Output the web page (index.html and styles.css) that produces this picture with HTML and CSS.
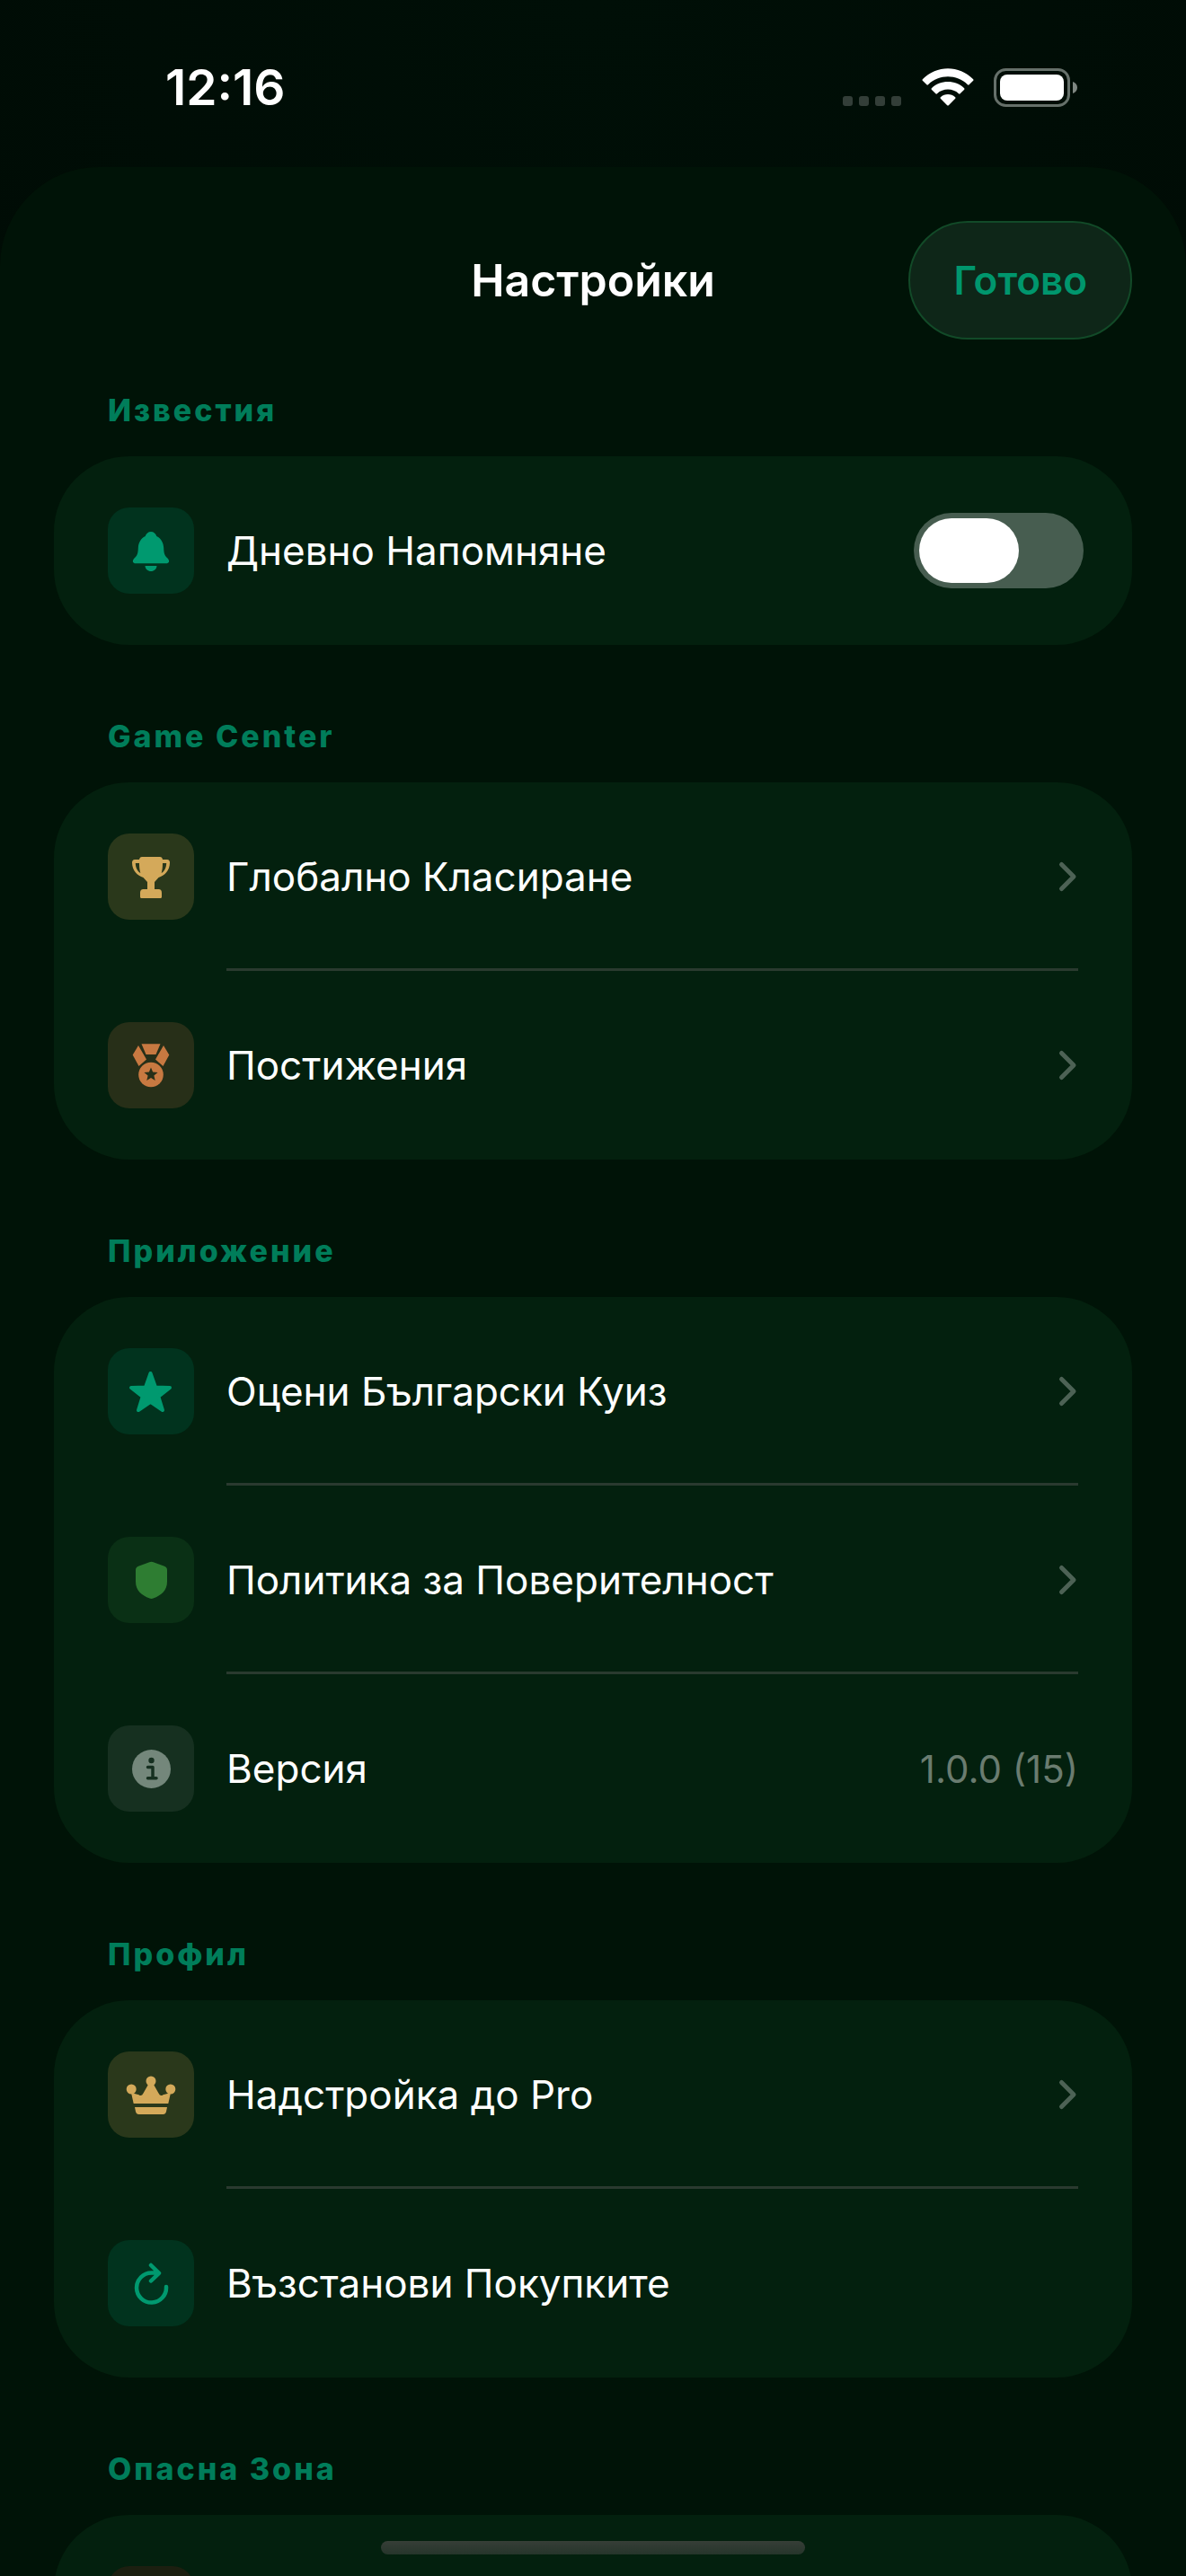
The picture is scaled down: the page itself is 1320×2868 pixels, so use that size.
FILE: index.html
```html
<!DOCTYPE html>
<html lang="bg">
  <head>
    <meta charset="utf-8">
    <meta name="viewport" content="width=device-width, initial-scale=1">
    <title>Настройки</title>
    <link rel="stylesheet" href="styles.css">
  </head>
  <body>
    <div class="screen">
      <div class="status-bar">
        <span class="time">12:16</span>
        <div class="status-icons">
          <svg class="signal" viewBox="0 0 66 12" aria-hidden="true">
            <rect x="0" y="0" width="11" height="11" rx="3" />
            <rect x="18" y="0" width="11" height="11" rx="3" />
            <rect x="36" y="0" width="11" height="11" rx="3" />
            <rect x="54" y="0" width="11" height="11" rx="3" />
          </svg>
          <svg class="wifi" viewBox="0 0 58 43" aria-hidden="true">
            <path d="M0.8 12.2 C16.5 -3.8 41.5 -3.8 57.2 12.2 Q57.8 13 57.2 13.8 L52.6 18.3 Q51.8 19 51 18.2 C38.8 6.3 19.2 6.3 7 18.2 Q6.2 19 5.4 18.3 L0.8 13.8 Q0.2 13 0.8 12.2 Z" />
            <path d="M10.8 22.2 C20.5 12.6 37.5 12.6 47.2 22.2 Q47.8 23 47.2 23.8 L42.6 28.3 Q41.8 29 41 28.2 C34.4 22 23.6 22 17 28.2 Q16.2 29 15.4 28.3 L10.8 23.8 Q10.2 23 10.8 22.2 Z" />
            <path d="M20.8 32.2 C25.4 28 32.6 28 37.2 32.2 Q37.9 33 37.2 33.8 L29.8 41.2 Q29 42 28.2 41.2 L20.8 33.8 Q20.1 33 20.8 32.2 Z" />
          </svg>
          <svg class="battery" viewBox="0 0 94 43" aria-hidden="true">
            <rect class="battery-shell" x="1.5" y="1.5" width="82" height="40" rx="12" />
            <rect x="7" y="7" width="71" height="29" rx="8" />
            <path class="battery-cap" d="M88 15 C91 16 93 18.500 93 21.500 C93 24.500 91 27 88 28 Z" />
          </svg>
        </div>
      </div>

      <main class="sheet">
        <header class="sheet-header">
          <h1>Настройки</h1>
          <button class="done" type="button">Готово</button>
        </header>

        <div class="list">
          <section>
            <h2>Известия</h2>
            <div class="card">
              <div class="row">
                <span class="tile teal">
                  <svg viewBox="0 0 96 96" aria-hidden="true">
                    <path d="M48 27 C51 27 53.4 29 54.3 32 C59.500 34.500 62 39.500 62.200 45 C62.400 52 63.500 53.500 66.500 56.500 C69.500 59.800 68 62.300 65 62.300 H31 C28 62.300 26.500 59.800 29.500 56.500 C32.500 53.500 33.600 52 33.800 45 C34 39.500 36.500 34.500 41.700 32 C42.600 29 45 27 48 27 Z" />
                    <path d="M41.500 65 H54.500 C54.300 68.500 51.500 71 48 71 C44.500 71 41.700 68.500 41.500 65 Z" />
                  </svg>
                </span>
                <div class="row-body wide">
                  <label for="reminder">Дневно Напомняне</label>
                  <input class="switch" type="checkbox" role="switch" id="reminder">
                </div>
              </div>
            </div>
          </section>

          <section>
            <h2>Game Center</h2>
            <div class="card">
              <a class="row" href="#leaderboard">
                <span class="tile gold">
                  <svg viewBox="0 0 96 96" aria-hidden="true">
                    <path fill-rule="evenodd" d="M38 26 H58 Q60.500 26 61 29 H66 Q69 29 69 32.500 C69 41 63 47 56.500 49 L52 54 V62 H56.500 Q60 62 60 66 V70.500 Q60 72 58.500 72 H37.500 Q36 72 36 70.500 V66 Q36 62 39.500 62 H44 V54 L39.500 49 C33 47 27 41 27 32.500 Q27 29 30 29 H35 Q35.500 26 38 26 Z M30.800 33 C31 38.500 33 42 36.300 44 C35.300 40.500 35 37 35 33 Z M65.200 33 H61 C61 37 60.700 40.500 59.700 44 C63 42 65 38.500 65.200 33 Z" />
                  </svg>
                </span>
                <span class="row-body">
                  Глобално Класиране
                  <svg class="chevron" viewBox="0 0 24 36" aria-hidden="true"><path d="M5.500 4.500 L19 18 L5.500 31.500" /></svg>
                </span>
              </a>
              <a class="row" href="#achievements">
                <span class="tile bronze">
                  <svg viewBox="0 0 96 96" aria-hidden="true">
                    <path d="M37.500 24.300 H58.500 L53.500 36 H42.500 Z" />
                    <path d="M34 26 L43 41.500 L34.500 49 L27.700 36.500 Z" />
                    <path d="M62 26 L53 41.500 L61.500 49 L68.300 36.500 Z" />
                    <circle cx="48" cy="58.500" r="13.800" />
                    <path class="cutout" d="M48 50.500 L50.100 55.600 L55.600 56 L51.400 59.600 L52.700 65 L48 62.100 L43.300 65 L44.600 59.600 L40.400 56 L45.900 55.600 Z" />
                  </svg>
                </span>
                <span class="row-body">
                  Постижения
                  <svg class="chevron" viewBox="0 0 24 36" aria-hidden="true"><path d="M5.500 4.500 L19 18 L5.500 31.500" /></svg>
                </span>
              </a>
            </div>
          </section>

          <section>
            <h2>Приложение</h2>
            <div class="card">
              <a class="row" href="#rate">
                <span class="tile teal">
                  <svg viewBox="0 0 96 96" aria-hidden="true">
                    <path class="rounded" d="M47.500 28 L53 43.500 L69 44 L56.300 53.800 L61 69 L47.500 59.800 L34 69 L38.700 53.800 L26 44 L42 43.500 Z" />
                  </svg>
                </span>
                <span class="row-body">
                  Оцени Български Куиз
                  <svg class="chevron" viewBox="0 0 24 36" aria-hidden="true"><path d="M5.500 4.500 L19 18 L5.500 31.500" /></svg>
                </span>
              </a>
              <a class="row" href="#privacy">
                <span class="tile green">
                  <svg viewBox="0 0 96 96" aria-hidden="true">
                    <path d="M46.300 28.300 Q48.500 27 50.700 28.300 L63 32.800 Q66 34 66 37 V50 C66 60 59.500 65 50.500 68.600 Q48.500 69.400 46.500 68.600 C37.500 65 31 60 31 50 V37 Q31 34 34 32.800 Z" />
                  </svg>
                </span>
                <span class="row-body">
                  Политика за Поверителност
                  <svg class="chevron" viewBox="0 0 24 36" aria-hidden="true"><path d="M5.500 4.500 L19 18 L5.500 31.500" /></svg>
                </span>
              </a>
              <div class="row">
                <span class="tile gray">
                  <svg viewBox="0 0 96 96" aria-hidden="true">
                    <circle cx="48.500" cy="48.500" r="21.500" />
                    <circle class="cutout" cx="48.500" cy="39" r="3.200" />
                    <path class="cutout-line" d="M44.500 46.500 H50 V58.500 M44.500 58.700 H54" />
                  </svg>
                </span>
                <div class="row-body">
                  Версия
                  <span class="value">1.0.0 (15)</span>
                </div>
              </div>
            </div>
          </section>

          <section>
            <h2>Профил</h2>
            <div class="card">
              <a class="row" href="#pro">
                <span class="tile gold">
                  <svg viewBox="0 0 96 96" aria-hidden="true">
                    <circle cx="48" cy="33" r="5.500" />
                    <circle cx="26.200" cy="42" r="5.500" />
                    <circle cx="69.800" cy="42" r="5.500" />
                    <path d="M26 46 L34.500 48.200 Q37.500 50.500 39.500 46.500 L46 35 H50 L56.500 46.500 Q58.500 50.500 61.500 48.200 L70 46 L67.300 58 H28.700 Z" />
                    <path d="M30 62 H66 L65 67 Q64.200 70 61.500 70 H34.500 Q31.800 70 31 67 Z" />
                  </svg>
                </span>
                <span class="row-body">
                  Надстройка до Pro
                  <svg class="chevron" viewBox="0 0 24 36" aria-hidden="true"><path d="M5.500 4.500 L19 18 L5.500 31.500" /></svg>
                </span>
              </a>
              <button class="row" type="button">
                <span class="tile teal">
                  <svg viewBox="0 0 96 96" aria-hidden="true">
                    <path class="outline" d="M65 52 A16.500 16.500 0 1 1 48.500 36.500 H56.500 M48 28 L57 36.800 L48 45.500" />
                  </svg>
                </span>
                <span class="row-body">Възстанови Покупките</span>
              </button>
            </div>
          </section>

          <section>
            <h2>Опасна Зона</h2>
            <div class="card">
              <div class="row">
                <span class="tile red"></span>
                <span class="row-body"></span>
              </div>
            </div>
          </section>
        </div>
      </main>

      <div class="home-indicator"></div>
    </div>
  </body>
</html>
```

FILE: styles.css
```css
* {
  box-sizing: border-box;
}

body {
  margin: 0;
  background-color: #000c05;
  color: #fff;
  font-family: Inter, "Liberation Sans", sans-serif;
}

.screen {
  position: relative;
  display: flex;
  flex-direction: column;
  height: 100vh;
  overflow: hidden;
  background: radial-gradient(circle at 50% 0, #000f07, #000803 60%);
}

/* status bar */
.status-bar {
  display: flex;
  flex-shrink: 0;
  align-items: center;
  justify-content: space-between;
  height: 186px;
  padding: 8px 120px 0 184px;
}

.time {
  font-size: 55px;
  font-weight: 600;
}

.status-icons {
  display: flex;
  align-items: flex-end;
  gap: 22px;
}

.status-icons svg {
  display: block;
  fill: #fff;
}

.signal {
  width: 66px;
  height: 12px;
  opacity: 0.2;
}

.wifi {
  width: 58px;
  height: 43px;
}

.battery {
  width: 94px;
  height: 43px;
}

.status-icons .battery-shell {
  fill: none;
  stroke: #66706a;
  stroke-width: 3;
}

.status-icons .battery-cap {
  fill: #7f8782;
}

/* sheet */
.sheet {
  display: flex;
  flex: 1;
  flex-direction: column;
  min-height: 0;
  border-radius: 110px 110px 0 0;
  background-color: #001307;
}

.sheet-header {
  display: grid;
  grid-template-columns: 1fr auto 1fr;
  align-items: center;
  padding: 60px 60px 0;
}

h1 {
  grid-column: 2;
  margin: 0;
  font-size: 50px;
  font-weight: 600;
  line-height: 60px;
}

.done {
  justify-self: end;
  height: 132px;
  padding: 0 48px;
  border: 2px solid #124a28;
  border-radius: 66px;
  background-color: #0e2618;
  color: #00966d;
  font-family: inherit;
  font-size: 44px;
  font-weight: 600;
}

.list {
  flex: 1;
  min-height: 0;
  padding: 59px 60px 0;
  overflow-y: auto;
  scrollbar-width: none;
}

section {
  margin-bottom: 82px;
}

h2 {
  margin: 0 60px 31px;
  color: #007d5a;
  font-size: 34px;
  font-weight: 800;
  line-height: 40px;
  letter-spacing: 3px;
}

.card {
  overflow: hidden;
  border-radius: 84px;
  background-color: #03200e;
}

.row {
  display: flex;
  align-items: center;
  gap: 36px;
  width: 100%;
  height: 210px;
  padding: 0 0 0 60px;
  border: none;
  background: none;
  color: #fff;
  font-family: inherit;
  font-size: 44px;
  text-align: left;
  text-decoration: none;
}

.row-body {
  display: flex;
  flex: 1;
  align-items: center;
  justify-content: space-between;
  height: 100%;
  margin-right: 60px;
}

.row-body.wide {
  margin-right: 54px;
}

.row:not(:last-child) .row-body {
  box-shadow: inset 0 -3px #2a3a2f;
}

.value {
  color: #6a7c70;
  font-size: 42px;
}

.chevron {
  width: 24px;
  height: 36px;
  fill: none;
  stroke: #4d6255;
  stroke-width: 5;
  stroke-linecap: round;
  stroke-linejoin: round;
}

/* icon tiles */
.tile {
  flex-shrink: 0;
  width: 96px;
  height: 96px;
  border-radius: 24px;
}

.tile svg {
  display: block;
  width: 100%;
  height: 100%;
  fill: currentColor;
}

.teal {
  background-color: #01331e;
  color: #00996f;
}

.gold {
  background-color: #2a381b;
  color: #d4a95a;
}

.bronze {
  background-color: #272f18;
  color: #c87941;
}

.green {
  background-color: #0a3015;
  color: #2e7d32;
}

.gray {
  background-color: #163020;
  color: #74877b;
}

.red {
  background-color: #1c1f10;
}

.bronze .cutout {
  fill: #272f18;
}

.gray .cutout {
  fill: #163020;
}

.cutout-line {
  fill: none;
  stroke: #163020;
  stroke-width: 3.5;
  stroke-linecap: round;
  stroke-linejoin: round;
}

.rounded {
  stroke: currentColor;
  stroke-width: 4;
  stroke-linejoin: round;
}

.outline {
  fill: none;
  stroke: currentColor;
  stroke-width: 4.5;
  stroke-linecap: round;
  stroke-linejoin: round;
}

/* toggle */
.switch {
  width: 189px;
  height: 84px;
  margin: 0;
  padding: 6px;
  border-radius: 42px;
  background-color: #475d50;
  appearance: none;
}

.switch::before {
  content: "";
  display: block;
  width: 111px;
  height: 72px;
  border-radius: 36px;
  background-color: #fff;
}

.switch:checked {
  background-color: #00966d;
}

.switch:checked::before {
  margin-left: auto;
}

.home-indicator {
  position: absolute;
  bottom: 24px;
  left: 50%;
  width: 472px;
  height: 15px;
  border-radius: 8px;
  background: linear-gradient(#363e37, #26352b);
  transform: translateX(-50%);
}
```
